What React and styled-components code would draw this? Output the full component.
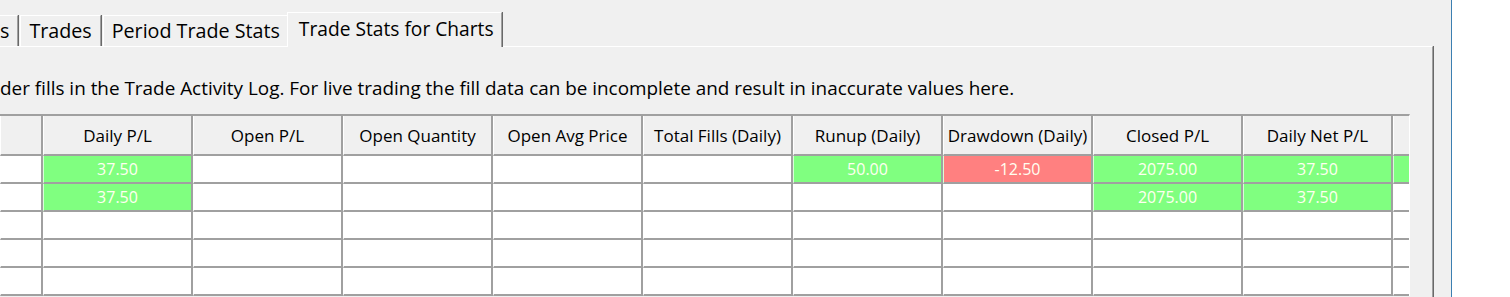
import styled, { createGlobalStyle } from 'styled-components';

const GlobalStyle = createGlobalStyle`
  html, body {
    margin: 0;
    padding: 0;
    background: #f0f0f0;
    overflow: hidden;
  }
  body {
    font-family: "Open Sans", "Noto Sans", sans-serif;
    color: #000;
  }
`;

const Window = styled.div`
  display: flex;
  width: 1510px;
  height: 297px;
  background: #f0f0f0;
  overflow: hidden;
`;

const Main = styled.div`
  width: 1451px;
  display: flex;
  flex-direction: column;
`;

const SidePane = styled.div`
  flex: 1;
  background: #fff;
  border-left: 1px solid #3c7fb1;
`;

const TabStrip = styled.div`
  height: 46px;
  display: flex;
  align-items: flex-end;
  position: relative;
  z-index: 1;
`;

const Tab = styled.div`
  box-sizing: border-box;
  height: ${(p) => (p.$active ? '35px' : '31px')};
  margin: ${(p) => (p.$active ? '0 -1px -1px -2px' : '0 0 0 2px')};
  padding: ${(p) => (p.$active ? '0 7px 4px 11px' : '0 8px 1px 8px')};
  display: flex;
  align-items: center;
  font-size: ${(p) => (p.$active ? '19.2px' : '19.7px')};
  white-space: nowrap;
  background: #f0f0f0;
  border-top: 1px solid #fff;
  border-left: ${(p) => (p.$cut ? 'none' : '1px solid #fff')};
  border-right: 1px solid #a0a0a0;
  box-shadow: 1px 0 0 #696969;
  margin-left: ${(p) => (p.$cut ? '0' : undefined)};
  padding-left: ${(p) => (p.$cut ? '0' : undefined)};
`;

const Panel = styled.div`
  width: 1433px;
  flex: 1;
  box-sizing: border-box;
  border-top: 1px solid #fff;
  border-right: 1px solid #a0a0a0;
  box-shadow: 1px 0 0 #696969;
  overflow: hidden;
`;

const Info = styled.div`
  margin-top: 30px;
  height: 22px;
  line-height: 22px;
  font-size: 18.9px;
  white-space: nowrap;
`;

const Grid = styled.div`
  margin-top: 15px;
  display: grid;
  grid-template-columns: 43px repeat(9, 150px) 16px;
  grid-template-rows: 40px;
  grid-auto-rows: 28px;
  width: 1410px;
  box-sizing: border-box;
  border-top: 2px solid #a0a0a0;
  border-right: 1px solid #fff;
  background: #fff;
`;

const HeadCell = styled.div`
  box-sizing: border-box;
  display: flex;
  align-items: center;
  justify-content: center;
  background: #f0f0f0;
  font-size: 17px;
  white-space: nowrap;
  overflow: hidden;
  border-bottom: 2px solid #a0a0a0;
  border-right: ${(p) => (p.$last ? 'none' : '2px solid #a0a0a0')};
  border-left: 1px solid #fff;
`;

const tones = {
  green: '#80ff80',
  red: '#ff8080',
};

const Cell = styled.div`
  box-sizing: border-box;
  display: flex;
  align-items: center;
  justify-content: center;
  background: ${(p) => tones[p.$tone] || '#fff'};
  color: #fffff0;
  font-size: 16px;
  border-bottom: 2px solid #a0a0a0;
  border-right: ${(p) => (p.$last ? 'none' : '2px solid #a0a0a0')};
  border-left: 1px solid ${(p) => (p.$tone ? '#d8ffd8' : '#fff')};
`;

const headers = [
  '',
  'Daily P/L',
  'Open P/L',
  'Open Quantity',
  'Open Avg Price',
  'Total Fills (Daily)',
  'Runup (Daily)',
  'Drawdown (Daily)',
  'Closed P/L',
  'Daily Net P/L',
  '',
];

const g = (v) => ({ v, tone: 'green' });
const r = (v) => ({ v, tone: 'red' });
const e = { v: '' };

const rows = [
  [e, g('37.50'), e, e, e, e, g('50.00'), r('-12.50'), g('2075.00'), g('37.50'), g('')],
  [e, g('37.50'), e, e, e, e, e, e, g('2075.00'), g('37.50'), e],
  Array(11).fill(e),
  Array(11).fill(e),
  Array(11).fill(e),
];

export default function App() {
  return (
    <>
      <GlobalStyle />
      <Window>
        <Main>
          <TabStrip>
            <Tab $cut>s</Tab>
            <Tab>Trades</Tab>
            <Tab>Period Trade Stats</Tab>
            <Tab $active>Trade Stats for Charts</Tab>
          </TabStrip>
          <Panel>
            <Info>
              der fills in the Trade Activity Log. For live trading the fill data can be
              incomplete and result in inaccurate values here.
            </Info>
            <Grid>
              {headers.map((h, i) => (
                <HeadCell key={i} $last={i === headers.length - 1}>
                  {h}
                </HeadCell>
              ))}
              {rows.map((row, ri) =>
                row.map((c, ci) => (
                  <Cell key={`${ri}-${ci}`} $tone={c.tone} $last={ci === row.length - 1}>
                    {c.v}
                  </Cell>
                ))
              )}
            </Grid>
          </Panel>
        </Main>
        <SidePane />
      </Window>
    </>
  );
}
